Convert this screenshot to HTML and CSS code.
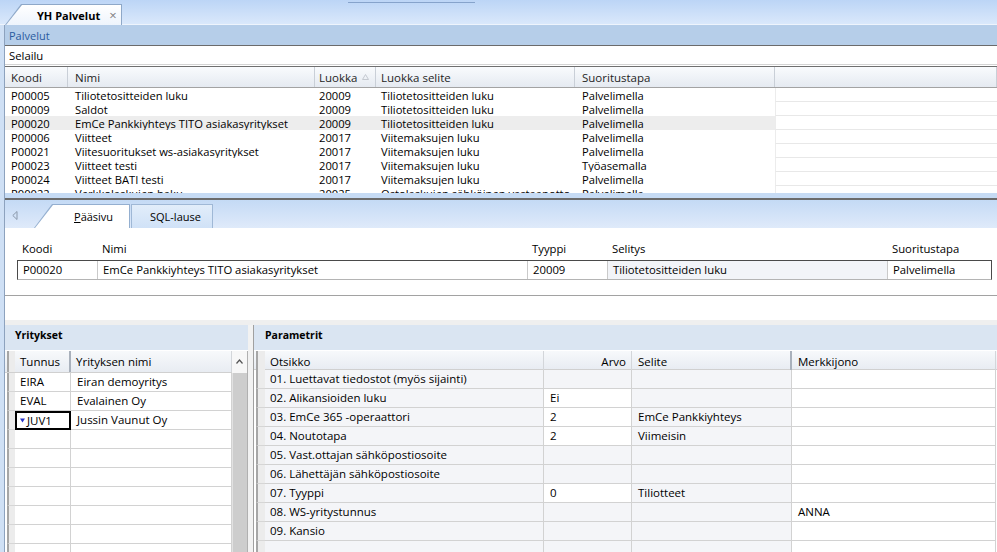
FILE: index.html
```html
<!DOCTYPE html>
<html lang="fi">
<head>
<meta charset="utf-8">
<title>YH Palvelut</title>
<link rel="stylesheet" href="styles.css">
</head>
<body>
<div class="app">
  <div class="docstrip">
    <div class="doctab"><div class="doctab-in"><span class="doctab-title">YH Palvelut</span><span class="doctab-close">×</span></div></div>
    <div class="docstrip-mark"></div>
  </div>
  <div class="main">
    <div class="ptitle">Palvelut</div>
    <div class="search">Selailu</div>
    <div class="tgrid">
      <div class="tg-row tg-head">
        <div class="c">Koodi</div><div class="c">Nimi</div><div class="c">Luokka<svg class="sort-arrow" width="7" height="6" viewBox="0 0 7 6"><path d="M0.5 5.5 L3.5 0.5 L6.5 5.5 Z" fill="none" stroke="#c4c9d0" stroke-width="1"/></svg></div><div class="c">Luokka selite</div><div class="c">Suoritustapa</div><div class="c"></div>
      </div>
      <div class="tg-body">
        <div class="tg-row tg-r"><div class="c">P00005</div><div class="c">Tiliotetositteiden luku</div><div class="c">20009</div><div class="c">Tiliotetositteiden luku</div><div class="c">Palvelimella</div><div class="c"></div></div>
        <div class="tg-row tg-r"><div class="c">P00009</div><div class="c">Saldot</div><div class="c">20009</div><div class="c">Tiliotetositteiden luku</div><div class="c">Palvelimella</div><div class="c"></div></div>
        <div class="tg-row tg-r sel"><div class="c">P00020</div><div class="c">EmCe Pankkiyhteys TITO asiakasyritykset</div><div class="c">20009</div><div class="c">Tiliotetositteiden luku</div><div class="c">Palvelimella</div><div class="c"></div></div>
        <div class="tg-row tg-r"><div class="c">P00006</div><div class="c">Viitteet</div><div class="c">20017</div><div class="c">Viitemaksujen luku</div><div class="c">Palvelimella</div><div class="c"></div></div>
        <div class="tg-row tg-r"><div class="c">P00021</div><div class="c">Viitesuoritukset ws-asiakasyritykset</div><div class="c">20017</div><div class="c">Viitemaksujen luku</div><div class="c">Palvelimella</div><div class="c"></div></div>
        <div class="tg-row tg-r"><div class="c">P00023</div><div class="c">Viitteet testi</div><div class="c">20017</div><div class="c">Viitemaksujen luku</div><div class="c">Työasemalla</div><div class="c"></div></div>
        <div class="tg-row tg-r"><div class="c">P00024</div><div class="c">Viitteet BATI testi</div><div class="c">20017</div><div class="c">Viitemaksujen luku</div><div class="c">Palvelimella</div><div class="c"></div></div>
        <div class="tg-row tg-r"><div class="c">P00022</div><div class="c">Verkkolaskujen haku</div><div class="c">20025</div><div class="c">Ostolaskujen sähköinen vastaanotto</div><div class="c">Palvelimella</div><div class="c"></div></div>
      </div>
    </div>
    <div class="hsplit"></div>
    <div class="ptabs">
      <svg class="ptabs-arrow" width="6" height="9" viewBox="0 0 6 9"><path d="M5 0.5 L0.8 4.5 L5 8.5 Z" fill="none" stroke="#8a98aa" stroke-width="1"/></svg>
      <div class="ptab"><div class="ptab-in"><span><span class="ul">P</span>ääsivu</span></div></div>
      <div class="ptab2">SQL-lause</div>
    </div>
    <div class="page">
      <div class="frow flabels">
        <div class="fl">Koodi</div><div class="fl">Nimi</div><div class="fl">Tyyppi</div><div class="fl">Selitys</div><div class="fl">Suoritustapa</div>
      </div>
      <div class="frow fbox">
        <div class="fc">P00020</div><div class="fc">EmCe Pankkiyhteys TITO asiakasyritykset</div><div class="fc">20009</div><div class="fc ro">Tiliotetositteiden luku</div><div class="fc">Palvelimella</div>
      </div>
      <div class="page-rule"></div>
    </div>
    <div class="band"></div>
    <div class="bottom">
      <div class="lpanel">
        <div class="phead">Yritykset</div>
        <div class="lgrid">
          <div class="ltable">
            <div class="lrow lhead"><div class="ind"></div><div class="hc">Tunnus</div><div class="hc">Yrityksen nimi</div></div>
            <div class="lrow"><div class="ind"></div><div class="bc">EIRA</div><div class="bc">Eiran demoyritys</div></div>
            <div class="lrow"><div class="ind"></div><div class="bc">EVAL</div><div class="bc">Evalainen Oy</div></div>
            <div class="lrow"><div class="ind"></div><div class="bc focus"><svg class="cur" width="5" height="5" viewBox="0 0 5 5"><path d="M0 0.5 H5 L2.5 4.5 Z" fill="#2834c8"/></svg>JUV1</div><div class="bc">Jussin Vaunut Oy</div></div>
            <div class="lrow"><div class="ind"></div><div class="bc"></div><div class="bc"></div></div>
            <div class="lrow"><div class="ind"></div><div class="bc"></div><div class="bc"></div></div>
            <div class="lrow"><div class="ind"></div><div class="bc"></div><div class="bc"></div></div>
            <div class="lrow"><div class="ind"></div><div class="bc"></div><div class="bc"></div></div>
            <div class="lrow"><div class="ind"></div><div class="bc"></div><div class="bc"></div></div>
            <div class="lrow"><div class="ind"></div><div class="bc"></div><div class="bc"></div></div>
            <div class="lrow"><div class="ind"></div><div class="bc"></div><div class="bc"></div></div>
          </div>
          <div class="vscroll">
            <div class="vs-btn"><svg width="7" height="5" viewBox="0 0 7 5"><path d="M0.5 4.5 L3.5 1 L6.5 4.5" fill="none" stroke="#555" stroke-width="1.2"/></svg></div>
            <div class="vs-thumb"></div>
          </div>
        </div>
      </div>
      <div class="vsplit"></div>
      <div class="rpanel">
        <div class="phead rphead">Parametrit</div>
        <div class="rtable">
          <div class="rrow rhead"><div class="ind"></div><div class="hc">Otsikko</div><div class="hc right">Arvo</div><div class="hc">Selite</div><div class="hc">Merkkijono</div></div>
          <div class="rrow"><div class="ind"></div><div class="bc ro">01. Luettavat tiedostot (myös sijainti)</div><div class="bc ro"></div><div class="bc ro"></div><div class="bc"></div></div>
          <div class="rrow"><div class="ind"></div><div class="bc ro">02. Alikansioiden luku</div><div class="bc">Ei</div><div class="bc ro"></div><div class="bc"></div></div>
          <div class="rrow"><div class="ind"></div><div class="bc ro">03. EmCe 365 -operaattori</div><div class="bc">2</div><div class="bc ro">EmCe Pankkiyhteys</div><div class="bc"></div></div>
          <div class="rrow"><div class="ind"></div><div class="bc ro">04. Noutotapa</div><div class="bc">2</div><div class="bc ro">Viimeisin</div><div class="bc"></div></div>
          <div class="rrow"><div class="ind"></div><div class="bc ro">05. Vast.ottajan sähköpostiosoite</div><div class="bc ro"></div><div class="bc ro"></div><div class="bc"></div></div>
          <div class="rrow"><div class="ind"></div><div class="bc ro">06. Lähettäjän sähköpostiosoite</div><div class="bc ro"></div><div class="bc ro"></div><div class="bc"></div></div>
          <div class="rrow"><div class="ind"></div><div class="bc ro">07. Tyyppi</div><div class="bc">0</div><div class="bc ro">Tiliotteet</div><div class="bc"></div></div>
          <div class="rrow"><div class="ind"></div><div class="bc ro">08. WS-yritystunnus</div><div class="bc ro"></div><div class="bc ro"></div><div class="bc">ANNA</div></div>
          <div class="rrow"><div class="ind"></div><div class="bc ro">09. Kansio</div><div class="bc ro"></div><div class="bc ro"></div><div class="bc"></div></div>
          <div class="rrow"><div class="ind"></div><div class="bc ro"></div><div class="bc ro"></div><div class="bc ro"></div><div class="bc"></div></div>
        </div>
      </div>
    </div>
  </div>
</div>
</body>
</html>
```
FILE: styles.css
```css
* { box-sizing: border-box; }
html, body { margin: 0; padding: 0; }
body {
  width: 997px;
  height: 552px;
  overflow: hidden;
  background: #cfe0f5;
  font-family: "Open Sans", "Noto Sans", sans-serif;
  font-size: 11px;
  color: #000;
}
.app { display: flex; flex-direction: column; height: 552px; }

/* document tab strip */
.docstrip {
  height: 25px;
  flex: none;
  background: linear-gradient(#bcd5f6, #dbe9fb);
  box-shadow: inset 0 -1px 0 #eef4fc;
  display: flex;
  align-items: flex-end;
  padding-left: 5px;
}
.doctab {
  width: 117px;
  height: 21px;
  background: #8ea8c8;
  clip-path: polygon(0 100%, 16px 0, 100% 0, 100% 100%);
  padding: 1px 1px 0 1px;
}
.doctab-in {
  height: 100%;
  background: linear-gradient(#ffffff, #eef4fc);
  clip-path: polygon(0 100%, 16px 0, 100% 0, 100% 100%);
  display: flex;
  align-items: center;
  padding-left: 31px;
}
.doctab-title { font-weight: 700; font-size: 11px; }
.doctab-close { margin-left: 9px; color: #808080; font-size: 13px; }
.docstrip-mark {
  align-self: flex-start;
  margin: 2px 0 0 226px;
  width: 127px;
  height: 1px;
  background: #86a3cb;
}

.main {
  flex: 1;
  min-height: 0;
  margin-left: 4px;
  border-left: 1px solid #8da2be;
  background: #fff;
  display: flex;
  flex-direction: column;
}
.ptitle {
  flex: none;
  height: 21px;
  background: #b6cee9;
  border-bottom: 1px solid #6b6b6b;
  color: #2a5b9f;
  padding-left: 4px;
  line-height: 22px;
}
.search {
  flex: none;
  height: 19px;
  border-bottom: 1px solid #d4d4d4;
  margin-bottom: 1px;
  padding-left: 4px;
  line-height: 20px;
  font-size: 11.3px;
}

/* top grid */
.tgrid { flex: none; border-top: 1px solid #6f6f6f; }
.tg-row { display: grid; grid-template-columns: 63px 247px 61px 199px 200px 1fr; }
.tg-row .c { white-space: nowrap; overflow: hidden; }
.tg-row .c:nth-child(1) { padding-left: 6px; }
.tg-row .c:nth-child(2) { padding-left: 7px; }
.tg-row .c:nth-child(3) { padding-left: 4px; }
.tg-row .c:nth-child(4) { padding-left: 5px; }
.tg-row .c:nth-child(5) { padding-left: 7px; }
.tg-head {
  height: 21px;
  line-height: 22px;
  font-size: 11.5px;
  background: linear-gradient(#f9fbfd, #e5eaf1);
  border-bottom: 1px solid #a3a3a3;
  color: #1e1e1e;
}
.tg-head .c { border-right: 1px solid #c9cfd7; position: relative; }
.sort-arrow { position: absolute; right: 6px; top: 7px; }
.tg-body { height: 105px; overflow: hidden; }
.tg-r { height: 14px; font-size: 11.2px; }
.tg-r .c { padding-top: 2px; line-height: 12px; height: 14px; }
.tg-r .c:last-child { border-left: 1px solid #ececec; border-bottom: 1px solid #e8e8e8; }
.tg-r.sel .c:not(:last-child) { background: #ededed; }

.hsplit {
  flex: none;
  height: 7px;
  background: #c6dbf4;
  border-bottom: 2px solid #6b6b6b;
}

/* page tabs */
.ptabs {
  flex: none;
  height: 28px;
  background: linear-gradient(#c4daf5, #dfeafa);
  display: flex;
  align-items: flex-end;
}
.ptabs-arrow { align-self: center; margin: 2px 16px 0 7px; }
.ptab {
  width: 96px;
  height: 24px;
  background: #94afd0;
  clip-path: polygon(0 100%, 18px 0, 100% 0, 100% 100%);
  padding: 1px 1px 0 1px;
}
.ptab-in {
  height: 100%;
  background: #fff;
  clip-path: polygon(0 100%, 18px 0, 100% 0, 100% 100%);
  padding-left: 39px;
  padding-top: 1px;
  line-height: 22px;
}
.ul { text-decoration: underline; }
.ptab2 {
  margin-left: 1px;
  width: 82px;
  height: 24px;
  background: linear-gradient(#e2edfa, #d0e2f7);
  border: 1px solid #9fb8d6;
  border-bottom: none;
  padding-left: 18px;
  padding-top: 1px;
  line-height: 22px;
}

/* form page */
.page { flex: none; height: 92px; padding-top: 14px; font-size: 11.3px; }
.frow {
  display: grid;
  grid-template-columns: 80px 430px 80px 280px 105px;
  margin-left: 12px;
  width: 975px;
}
.flabels { height: 14px; line-height: 14px; }
.fl { padding-left: 5px; }
.fbox {
  margin-top: 4px;
  height: 20px;
  border: 1px solid #4a4a4a;
  border-bottom-color: #b4b4b4;
}
.fc { padding-left: 5px; line-height: 18px; border-right: 1px solid #cacaca; white-space: nowrap; }
.fc:last-child { border-right: none; }
.fc.ro { background: #f2f4f8; }
.page-rule { margin-top: 15px; height: 1px; background: #a2a2a2; }
.band { flex: none; height: 5px; background: #efefef; }

/* bottom panels */
.bottom { flex: 1; min-height: 0; display: flex; overflow: hidden; font-size: 11.5px; }
.phead {
  height: 25px;
  flex: none;
  background: #dae5f2;
  font-weight: 700;
  font-size: 10.5px;
  padding-left: 10px;
  line-height: 21px;
  margin-bottom: 1px;
}
.lpanel { width: 243px; flex: none; display: flex; flex-direction: column; }
.lgrid { flex: 1; display: flex; min-height: 0; }
.ltable { flex: 1; }
.lrow { display: grid; grid-template-columns: 10px 56px 161px; height: 19px; }
.lhead, .rhead {
  height: 22px;
  background: linear-gradient(#f7f9fb, #e8ecf2);
  border-bottom: 1px solid #d0d0d0;
}
.ind {
  margin-left: 2px;
  border-left: 2px solid #a6a6a6;
  background: #ececec;
  border-bottom: 1px solid #d6d6d6;
}
.lhead .ind, .rhead .ind { border-bottom: none; }
.hc {
  padding-left: 5px;
  line-height: 21px;
  border-right: 1px solid #d3d6da;
  white-space: nowrap;
}
.lhead .hc:nth-child(2) { border-right: 2px solid #a9b1bc; }
.hc.right { text-align: right; padding-right: 5px; }
.bc {
  padding-left: 5px;
  line-height: 18px;
  border-right: 1px solid #d2d2d2;
  border-bottom: 1px solid #d2d2d2;
  white-space: nowrap;
  overflow: hidden;
}
.lrow .bc:nth-child(3) { padding-left: 6px; }
.bc.focus {
  border: 2px solid #000;
  padding-left: 3px;
  line-height: 15px;
  display: flex;
  align-items: center;
  gap: 2px;
}
.cur { flex: none; }
.vscroll { width: 16px; flex: none; display: flex; flex-direction: column; border-right: 1px solid #b0b0b0; }
.vs-btn {
  height: 22px;
  background: #f7f7f7;
  display: flex;
  align-items: center;
  justify-content: center;
  padding-bottom: 2px;
}
.vs-thumb { flex: 1; background: #cdcdcd; border-left: 1px solid #e2e2e2; }
.vsplit { width: 6px; flex: none; background: #f2f2f2; border-right: 1px solid #a0a0a0; }
.rpanel { flex: 1; display: flex; flex-direction: column; min-width: 0; }
.rphead { padding-left: 11px; }
.rrow { display: grid; grid-template-columns: 11px 279px 88px 160px 204px; height: 19px; }
.rrow .bc:nth-child(2) { padding-left: 5px; }
.rrow .bc:nth-child(n+3) { padding-left: 6px; }
.rhead .hc:nth-child(4) { padding-left: 6px; border-right: 2px solid #a9b1bc; }
.rhead .hc:nth-child(5) { padding-left: 6px; }
.bc.ro { background: #f4f5f8; }
```
